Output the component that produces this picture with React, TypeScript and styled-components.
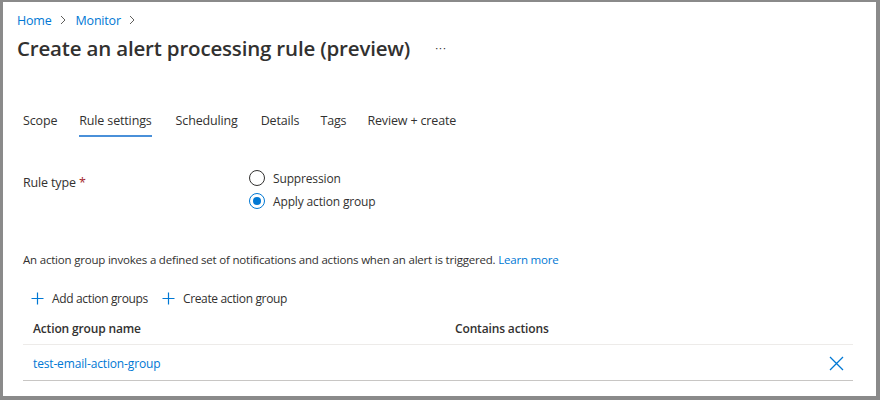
import React from "react";
import styled, { createGlobalStyle } from "styled-components";

const Global = createGlobalStyle`
  html, body { margin: 0; padding: 0; background: #8a8a8a; }
  body { font-family: "Open Sans", "Noto Sans", sans-serif; color: #323130; }
  * { box-sizing: border-box; }
`;

const Frame = styled.div`
  width: 880px;
  height: 400px;
  padding: 2px 4px 4px 3px;
  background: #8a8a8a;
`;

const Panel = styled.div`
  width: 100%;
  height: 100%;
  background: #ffffff;
  padding: 8px 0 0 14px;
  display: flex;
  flex-direction: column;
  overflow: hidden;
`;

const Breadcrumb = styled.nav`
  display: flex;
  align-items: center;
  gap: 6px;
  height: 20px;
  font-size: 12.5px;
  letter-spacing: -0.2px;
`;

const Crumb = styled.a`
  color: #0078d4;
  text-decoration: none;
`;

const Chevron = styled.svg`
  width: 10px;
  height: 10px;
  margin-right: 2px;
`;

const TitleRow = styled.div`
  display: flex;
  align-items: center;
  margin-top: 4px;
  height: 28px;
`;

const Title = styled.h1`
  margin: 0;
  font-size: 20.5px;
  font-weight: 600;
  letter-spacing: -0.18px;
  line-height: 28px;
  color: #323130;
`;

const More = styled.span`
  margin-left: 25px;
  font-size: 11px;
  color: #323130;
  letter-spacing: 1px;
  position: relative;
  top: -1px;
`;

const Tabs = styled.div`
  display: flex;
  margin-top: 45px;
  padding-left: 6px;
`;

const Tab = styled.div<{ $active?: boolean; $mr?: number }>`
  height: 30px;
  line-height: 28px;
  font-size: 12.5px;
  letter-spacing: -0.15px;
  color: #323130;
  margin-right: ${(p) => p.$mr ?? 22}px;
  border-bottom: 2px solid ${(p) => (p.$active ? "#4a90d9" : "transparent")};
`;

const Form = styled.div`
  display: grid;
  grid-template-columns: 226px 1fr;
  margin-top: 30px;
  padding-left: 6px;
`;

const Label = styled.div`
  font-size: 12.5px;
  letter-spacing: -0.15px;
  line-height: 22px;
  padding-top: 5px;
  color: #323130;
`;

const Required = styled.span`
  color: #a4262c;
`;

const RadioGroup = styled.div`
  display: flex;
  flex-direction: column;
  gap: 1px;
`;

const RadioRow = styled.label`
  display: flex;
  align-items: center;
  height: 22px;
  gap: 8px;
  font-size: 12px;
  letter-spacing: -0.15px;
  color: #323130;
`;

const RadioCircle = styled.span<{ $checked?: boolean }>`
  width: 16px;
  height: 16px;
  border-radius: 50%;
  border: 1px solid ${(p) => (p.$checked ? "#0078d4" : "#323130")};
  display: flex;
  align-items: center;
  justify-content: center;
  &::after {
    content: "";
    width: 8px;
    height: 8px;
    border-radius: 50%;
    background: ${(p) => (p.$checked ? "#0078d4" : "transparent")};
  }
`;

const Description = styled.p`
  margin: 39px 0 0 6px;
  font-size: 11.5px;
  letter-spacing: -0.2px;
  line-height: 18px;
  color: #323130;
`;

const Link = styled.a`
  color: #0078d4;
  text-decoration: none;
`;

const CommandBar = styled.div`
  display: flex;
  align-items: center;
  height: 30px;
  margin-top: 14px;
  padding-left: 14px;
  gap: 14px;
`;

const Command = styled.button`
  display: flex;
  align-items: center;
  gap: 8px;
  background: none;
  border: none;
  padding: 0;
  font-family: inherit;
  font-size: 12px;
  letter-spacing: -0.35px;
  color: #323130;
`;

const Table = styled.div`
  margin: 0 0 0 6px;
  width: 830px;
`;

const HeaderRow = styled.div`
  display: grid;
  grid-template-columns: 422px 1fr 50px;
  height: 32px;
  align-items: center;
  border-bottom: 1px solid #edebe9;
  font-size: 12px;
  font-weight: 600;
  letter-spacing: -0.15px;
  color: #323130;
`;

const DataRow = styled.div`
  display: grid;
  grid-template-columns: 422px 1fr 50px;
  height: 36px;
  align-items: center;
  padding-top: 2px;
  border-bottom: 1px solid #c8c6c4;
  font-size: 12px;
  letter-spacing: -0.15px;
`;

const Cell = styled.div`
  padding-left: 10px;
`;

const IconCell = styled.div`
  display: flex;
  justify-content: flex-end;
  padding-right: 9px;
`;

const Plus = () => (
  <svg width="13" height="13" viewBox="0 0 13 13">
    <path d="M6.5 0.5v12M0.5 6.5h12" stroke="#0078d4" strokeWidth="1.2" fill="none" />
  </svg>
);

const Dismiss = () => (
  <svg width="15" height="15" viewBox="0 0 15 15">
    <path d="M1 1l13 13M14 1L1 14" stroke="#0078d4" strokeWidth="1.3" fill="none" />
  </svg>
);

const ChevronIcon = () => (
  <Chevron viewBox="0 0 10 10">
    <path d="M3 1l4 4-4 4" stroke="#605e5c" strokeWidth="1" fill="none" />
  </Chevron>
);

export default function App() {
  return (
    <>
      <Global />
      <Frame>
        <Panel>
          <Breadcrumb>
            <Crumb>Home</Crumb>
            <ChevronIcon />
            <Crumb>Monitor</Crumb>
            <ChevronIcon />
          </Breadcrumb>
          <TitleRow>
            <Title>Create an alert processing rule (preview)</Title>
            <More>···</More>
          </TitleRow>
          <Tabs>
            <Tab $mr={22}>Scope</Tab>
            <Tab $active $mr={24}>Rule settings</Tab>
            <Tab $mr={23}>Scheduling</Tab>
            <Tab $mr={21}>Details</Tab>
            <Tab $mr={21}>Tags</Tab>
            <Tab>Review + create</Tab>
          </Tabs>
          <Form>
            <Label>
              Rule type <Required>*</Required>
            </Label>
            <RadioGroup>
              <RadioRow>
                <RadioCircle />
                Suppression
              </RadioRow>
              <RadioRow>
                <RadioCircle $checked />
                Apply action group
              </RadioRow>
            </RadioGroup>
          </Form>
          <Description>
            An action group invokes a defined set of notifications and actions when an alert is triggered.{" "}
            <Link>Learn more</Link>
          </Description>
          <CommandBar>
            <Command>
              <Plus />
              Add action groups
            </Command>
            <Command>
              <Plus />
              Create action group
            </Command>
          </CommandBar>
          <Table>
            <HeaderRow>
              <Cell>Action group name</Cell>
              <Cell>Contains actions</Cell>
              <div />
            </HeaderRow>
            <DataRow>
              <Cell>
                <Link>test-email-action-group</Link>
              </Cell>
              <Cell />
              <IconCell>
                <Dismiss />
              </IconCell>
            </DataRow>
          </Table>
        </Panel>
      </Frame>
    </>
  );
}
